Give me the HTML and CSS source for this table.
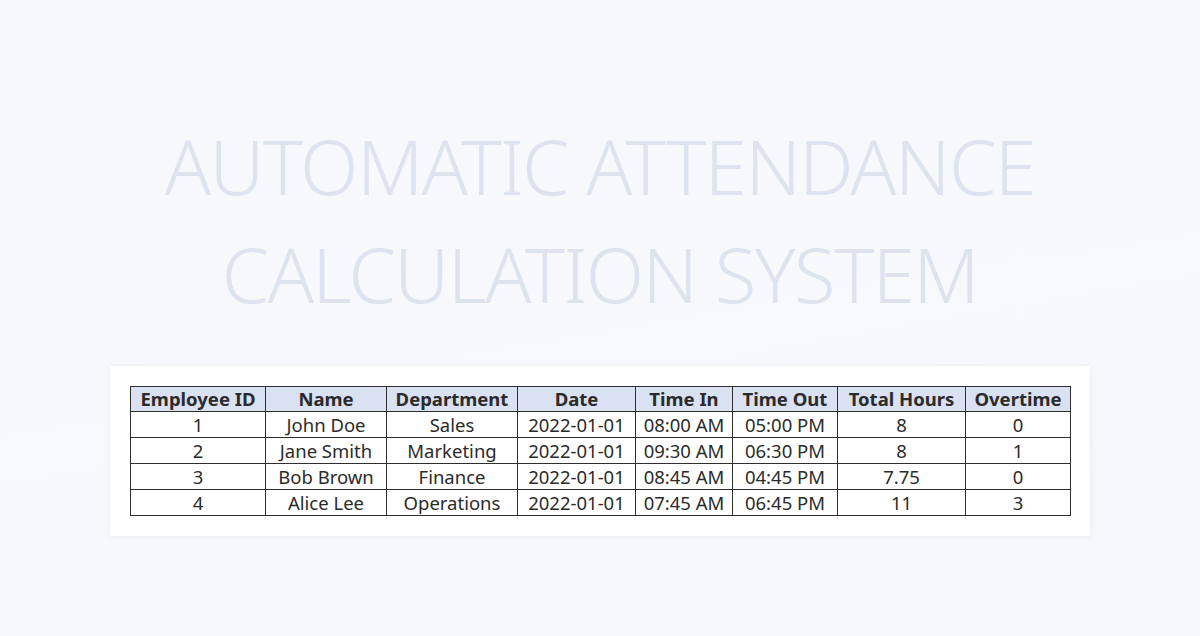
FILE: index.html
```html
<!DOCTYPE html>
<html lang="en">
<head>
<meta charset="utf-8">
<title>Automatic Attendance Calculation System</title>
<link rel="stylesheet" href="styles.css">
</head>
<body>
<main class="page">
  <h1 class="title">AUTOMATIC ATTENDANCE<br>CALCULATION SYSTEM</h1>
  <section class="card">
    <table class="sheet">
      <colgroup>
        <col class="c1"><col class="c2"><col class="c3"><col class="c4"><col class="c5"><col class="c6"><col class="c7"><col class="c8">
      </colgroup>
      <thead>
        <tr><th>Employee ID</th><th>Name</th><th>Department</th><th>Date</th><th>Time In</th><th>Time Out</th><th>Total Hours</th><th>Overtime</th></tr>
      </thead>
      <tbody>
        <tr><td>1</td><td>John Doe</td><td>Sales</td><td>2022-01-01</td><td>08:00 AM</td><td>05:00 PM</td><td>8</td><td>0</td></tr>
        <tr><td>2</td><td>Jane Smith</td><td>Marketing</td><td>2022-01-01</td><td>09:30 AM</td><td>06:30 PM</td><td>8</td><td>1</td></tr>
        <tr><td>3</td><td>Bob Brown</td><td>Finance</td><td>2022-01-01</td><td>08:45 AM</td><td>04:45 PM</td><td>7.75</td><td>0</td></tr>
        <tr><td>4</td><td>Alice Lee</td><td>Operations</td><td>2022-01-01</td><td>07:45 AM</td><td>06:45 PM</td><td>11</td><td>3</td></tr>
      </tbody>
    </table>
  </section>
</main>
</body>
</html>
```
FILE: styles.css
```css
html, body {
  margin: 0;
  padding: 0;
}
body {
  width: 1200px;
  height: 636px;
  overflow: hidden;
  background: linear-gradient(170deg, #f7f8fb 0%, #f8f9fc 55%, #f6f8fb 100%);
  font-family: "Noto Sans", "Open Sans", sans-serif;
}
.page {
  display: flex;
  flex-direction: column;
  align-items: center;
  padding-top: 112px;
}
.title {
  margin: 0;
  font-family: "Noto Sans", sans-serif;
  font-weight: 300;
  font-size: 76px;
  line-height: 108px;
  color: #dde3ef;
  text-align: center;
  letter-spacing: -1.5px;
}
.card {
  margin-top: 38px;
  width: 980px;
  box-sizing: border-box;
  padding: 20px;
  background: #ffffff;
  box-shadow: 0 0 6px rgba(200, 205, 220, 0.35);
}
.sheet {
  width: 940px;
  border-collapse: collapse;
  table-layout: fixed;
  color: #2b2b2b;
  font-size: 18.5px;
}
.c1 { width: 135px; }
.c2 { width: 121px; }
.c3 { width: 131px; }
.c4 { width: 118px; }
.c5 { width: 97px; }
.c6 { width: 105px; }
.c7 { width: 128px; }
.c8 { width: 105px; }
.sheet th, .sheet td {
  border: 1px solid #2e2e2e;
  padding: 0;
  text-align: center;
  white-space: nowrap;
}
.sheet th {
  height: 24px;
  line-height: 24px;
  background: #d9e1f2;
  font-weight: 700;
}
.sheet td {
  height: 25px;
  line-height: 25px;
  font-weight: 400;
}
```
